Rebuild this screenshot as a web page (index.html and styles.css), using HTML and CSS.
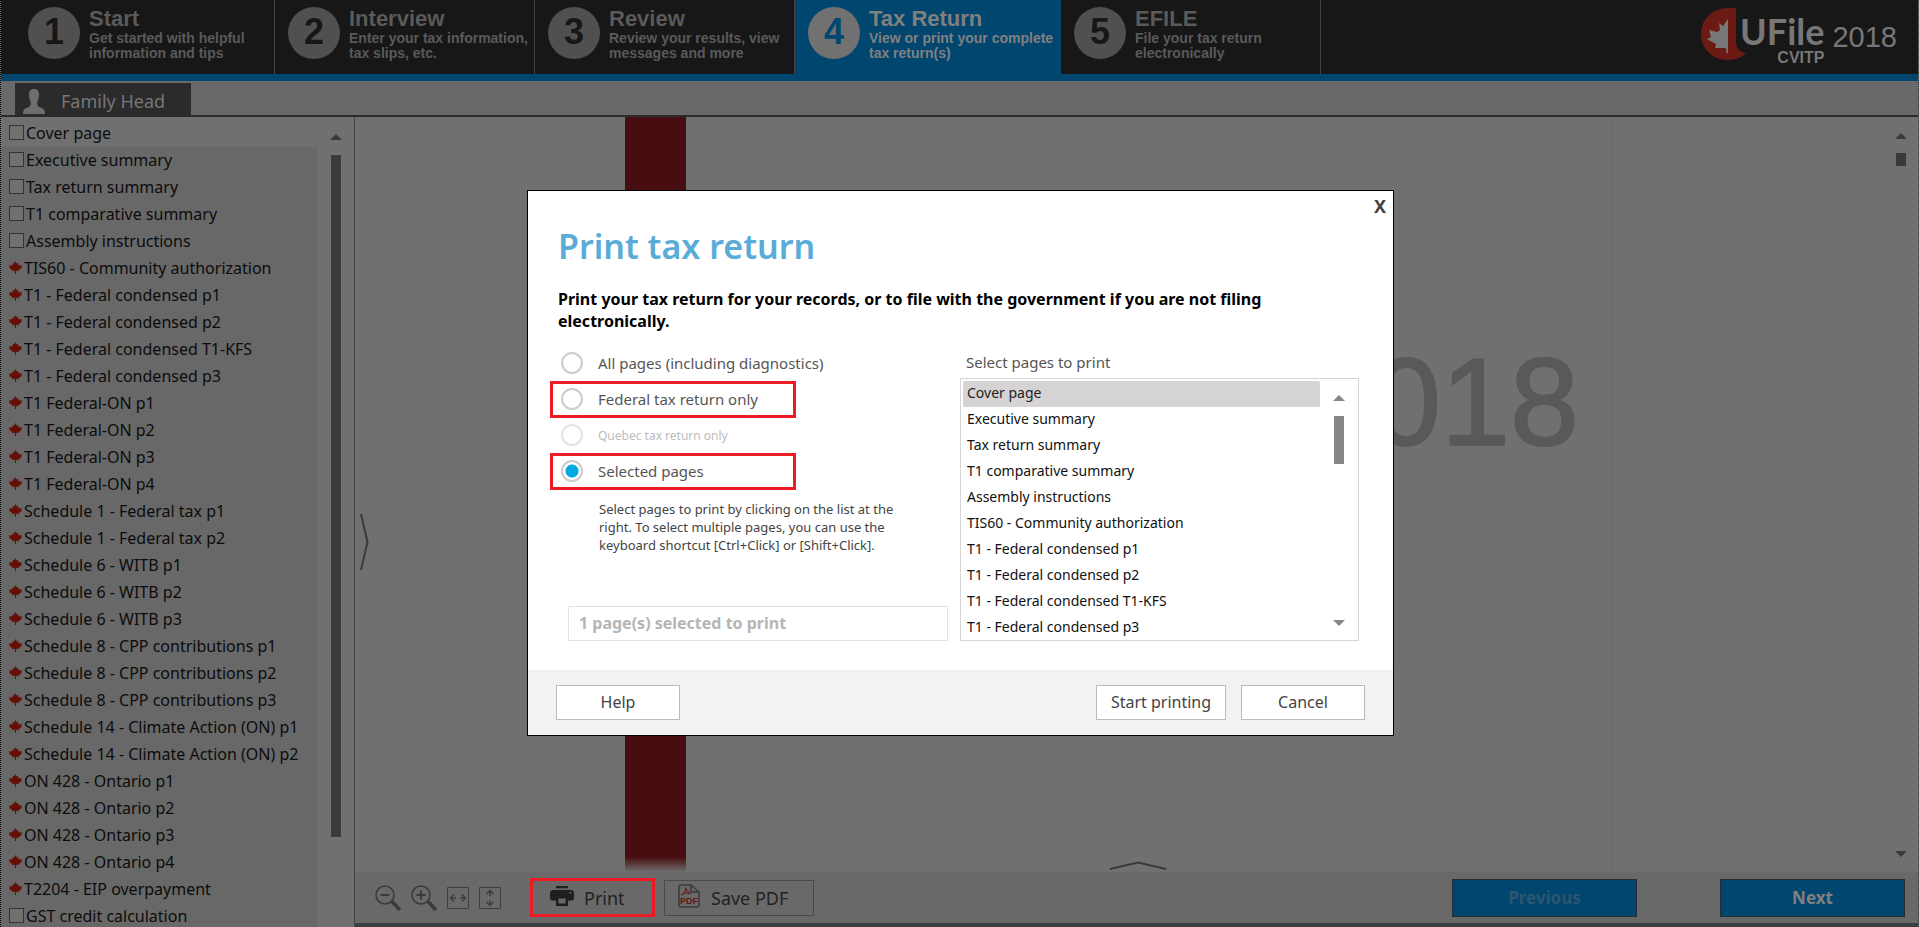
FILE: index.html
```html
<!DOCTYPE html>
<html lang="en">
<head>
<meta charset="utf-8">
<title>UFile 2018 - Print tax return</title>
<link rel="stylesheet" href="styles.css">
</head>
<body>
<svg class="defs" aria-hidden="true">
  <symbol id="leaf" viewBox="0 0 24 24"><path d="M12 0 9.600 4.600 6.800 3.400 7.600 7.600 5.400 6.600 4.600 8.400 0 8 1.600 11.400 0 12.600 6.400 17.200 5.800 18.800 11 18.200V24h2v-5.800l5.200.600-.600-1.600L24 12.600l-1.600-1.200L24 8l-4.600.400-.8-1.800-2.200 1 .8-4.200-2.800 1.200z"/></symbol>
</svg>
<div class="app">
  <header class="top">
    <nav class="steps">
      <a class="step first" href="#start"><span class="num">1</span><span class="txt"><b>Start</b><span>Get started with helpful<br>information and tips</span></span></a>
      <a class="step" href="#interview"><span class="num">2</span><span class="txt"><b>Interview</b><span>Enter your tax information,<br>tax slips, etc.</span></span></a>
      <a class="step" href="#review"><span class="num">3</span><span class="txt"><b>Review</b><span>Review your results, view<br>messages and more</span></span></a>
      <a class="step active" href="#return"><span class="num">4</span><span class="txt"><b>Tax Return</b><span>View or print your complete<br>tax return(s)</span></span></a>
      <a class="step" href="#efile"><span class="num">5</span><span class="txt"><b>EFILE</b><span>File your tax return<br>electronically</span></span></a>
    </nav>
    <div class="brand">
      <svg class="brand-mark" viewBox="0 0 46 53" aria-hidden="true">
        <path fill="#6b1b14" d="M35 1H27C12 1 0 12 0 27s12 26 26 26c8 0 14-2 19-7-7-1-10-5-10-12z"/>
        <path fill="#777" d="M27 12v34h-1.500L25 41H14l1-4-9-5 4-2-2-7 8 2 3-2-1-7 4 3z"/>
      </svg>
      <div class="brand-name"><span class="ufile">UFile</span><span class="cvitp">CVITP</span></div>
      <span class="year">2018</span>
    </div>
  </header>
  <div class="tabs">
    <button class="tab" type="button">
      <svg width="22" height="25" viewBox="0 0 26 25" preserveAspectRatio="none" aria-hidden="true"><path fill="#6e6e6e" d="M13 0c4 0 6 2 6 6 0 3-1 4-2 7-.500 2 0 4 2 5 4 1 7 2 7 7H0c0-5 3-6 7-7 2-1 2.500-3 2-5-1-3-2-4-2-7 0-4 2-6 6-6z"/></svg>
      Family Head
    </button>
  </div>
  <div class="main">
    <aside class="side">
      <ul class="pages">
        <li class="current"><label><input type="checkbox">Cover page</label></li>
        <li><label><input type="checkbox">Executive summary</label></li>
        <li><label><input type="checkbox">Tax return summary</label></li>
        <li><label><input type="checkbox">T1 comparative summary</label></li>
        <li><label><input type="checkbox">Assembly instructions</label></li>
        <li><a href="#p"><svg><use href="#leaf"/></svg>TIS60 - Community authorization</a></li>
        <li><a href="#p"><svg><use href="#leaf"/></svg>T1 - Federal condensed p1</a></li>
        <li><a href="#p"><svg><use href="#leaf"/></svg>T1 - Federal condensed p2</a></li>
        <li><a href="#p"><svg><use href="#leaf"/></svg>T1 - Federal condensed T1-KFS</a></li>
        <li><a href="#p"><svg><use href="#leaf"/></svg>T1 - Federal condensed p3</a></li>
        <li><a href="#p"><svg><use href="#leaf"/></svg>T1 Federal-ON p1</a></li>
        <li><a href="#p"><svg><use href="#leaf"/></svg>T1 Federal-ON p2</a></li>
        <li><a href="#p"><svg><use href="#leaf"/></svg>T1 Federal-ON p3</a></li>
        <li><a href="#p"><svg><use href="#leaf"/></svg>T1 Federal-ON p4</a></li>
        <li><a href="#p"><svg><use href="#leaf"/></svg>Schedule 1 - Federal tax p1</a></li>
        <li><a href="#p"><svg><use href="#leaf"/></svg>Schedule 1 - Federal tax p2</a></li>
        <li><a href="#p"><svg><use href="#leaf"/></svg>Schedule 6 - WITB p1</a></li>
        <li><a href="#p"><svg><use href="#leaf"/></svg>Schedule 6 - WITB p2</a></li>
        <li><a href="#p"><svg><use href="#leaf"/></svg>Schedule 6 - WITB p3</a></li>
        <li><a href="#p"><svg><use href="#leaf"/></svg>Schedule 8 - CPP contributions p1</a></li>
        <li><a href="#p"><svg><use href="#leaf"/></svg>Schedule 8 - CPP contributions p2</a></li>
        <li><a href="#p"><svg><use href="#leaf"/></svg>Schedule 8 - CPP contributions p3</a></li>
        <li><a href="#p"><svg><use href="#leaf"/></svg>Schedule 14 - Climate Action (ON) p1</a></li>
        <li><a href="#p"><svg><use href="#leaf"/></svg>Schedule 14 - Climate Action (ON) p2</a></li>
        <li><a href="#p"><svg><use href="#leaf"/></svg>ON 428 - Ontario p1</a></li>
        <li><a href="#p"><svg><use href="#leaf"/></svg>ON 428 - Ontario p2</a></li>
        <li><a href="#p"><svg><use href="#leaf"/></svg>ON 428 - Ontario p3</a></li>
        <li><a href="#p"><svg><use href="#leaf"/></svg>ON 428 - Ontario p4</a></li>
        <li><a href="#p"><svg><use href="#leaf"/></svg>T2204 - EIP overpayment</a></li>
        <li><label><input type="checkbox">GST credit calculation</label></li>
      </ul>
      <div class="side-scroll"><i class="up"></i><i class="thumb"></i></div>
    </aside>
    <section class="work">
      <div class="viewer">
        <button class="expand" type="button" aria-label="Expand list"><svg width="9" height="58" viewBox="0 0 9 58"><path d="M1 1 7.500 29 1 57" fill="none" stroke="#3a3a3a" stroke-width="2"/></svg></button>
        <div class="sheet">
          <div class="band"></div>
          <div class="sheet-year">2018</div>
          <button class="raise" type="button" aria-label="Show details"><svg width="58" height="9" viewBox="0 0 58 9"><path d="M1 8 29 1.500 57 8" fill="none" stroke="#3a3a3a" stroke-width="2"/></svg></button>
        </div>
        <div class="view-scroll"><i class="up"></i><i class="thumb"></i><i class="down"></i></div>
      </div>
      <footer class="bar">
        <div class="zooms">
          <button type="button" aria-label="Zoom out"><svg width="26" height="26" viewBox="0 0 26 26" fill="none" stroke="#3a3a3a"><circle cx="10" cy="10" r="9" stroke-width="1.500"/><path d="M5.500 10h9" stroke-width="2"/><path d="M17 16.500 25 25" stroke-width="3.500"/></svg></button>
          <button type="button" aria-label="Zoom in"><svg width="26" height="26" viewBox="0 0 26 26" fill="none" stroke="#3a3a3a"><circle cx="10" cy="10" r="9" stroke-width="1.500"/><path d="M5.500 10h9M10 5.500v9" stroke-width="2"/><path d="M17 16.500 25 25" stroke-width="3.500"/></svg></button>
          <button type="button" aria-label="Fit width"><svg width="22" height="22" viewBox="0 0 22 22" fill="none" stroke="#3e3e3e"><path d="M.5.500h21v21H.500z"/><path d="M4 11h5M13 11h5M7 7.500 3.500 11 7 14.500M15 7.500 18.500 11 15 14.500" stroke-width="1.500"/></svg></button>
          <button type="button" aria-label="Fit page"><svg width="22" height="22" viewBox="0 0 22 22" fill="none" stroke="#3e3e3e"><path d="M.5.500h21v21H.500z"/><path d="M11 4v5M11 13v5M7.500 7 11 3.500 14.500 7M7.500 15 11 18.500 14.500 15" stroke-width="1.500"/></svg></button>
        </div>
        <button class="tool marked" type="button">
          <svg width="24" height="20" viewBox="0 0 24 20" aria-hidden="true"><path fill="#1f1f1f" d="M6 0h12v2.200H6zM2 4h20l2 2v7l-1.500 1.500H18V20H6v-5.500H1.500L0 13V6z"/><path fill="#696969" d="M8.500 12.500h7v5h-7zM19.500 6h2v1.500h-2z"/></svg>Print</button>
        <button class="tool save" type="button">
          <svg width="22" height="24" viewBox="0 0 22 24" aria-hidden="true"><path d="M1 3q0-2 2-2h10l8 7v13q0 2-2 2H3q-2 0-2-2z" fill="none" stroke="#3a3a3a" stroke-width="1.500"/><path d="M13 1v7h8" fill="none" stroke="#3a3a3a" stroke-width="1.500"/><path d="M3 11Q8 9 7.500 3.500q.500 4 5 6Q7 7.500 3 11z" fill="none" stroke="#6b1414"/><text x="2" y="20" class="pdf-mark">PDF</text></svg>Save PDF</button>
        <button class="move prev" type="button" disabled>Previous</button>
        <button class="move" type="button">Next</button>
      </footer>
    </section>
  </div>
</div>

<div class="overlay">
  <div class="dialog" role="dialog" aria-modal="true" aria-labelledby="dlg-title">
    <button class="close" type="button" aria-label="Close">X</button>
    <div class="content">
      <h1 id="dlg-title">Print tax return</h1>
      <p class="lead">Print your tax return for your records, or to file with the government if you are not filing electronically.</p>
      <div class="cols">
        <div class="choices">
          <label class="choice"><input type="radio" name="scope">All pages (including diagnostics)</label>
          <label class="choice marked"><input type="radio" name="scope">Federal tax return only</label>
          <label class="choice off"><input type="radio" name="scope" disabled>Quebec tax return only</label>
          <label class="choice marked"><input type="radio" name="scope" checked>Selected pages</label>
          <p class="hint">Select pages to print by clicking on the list at the right. To select multiple pages, you can use the keyboard shortcut [Ctrl+Click] or [Shift+Click].</p>
          <input class="count" type="text" aria-label="Selection" value="1 page(s) selected to print" disabled>
        </div>
        <div class="picker">
          <label for="pick">Select pages to print</label>
          <div class="listbox">
            <select id="pick" multiple size="10">
              <option selected>Cover page</option>
              <option>Executive summary</option>
              <option>Tax return summary</option>
              <option>T1 comparative summary</option>
              <option>Assembly instructions</option>
              <option>TIS60 - Community authorization</option>
              <option>T1 - Federal condensed p1</option>
              <option>T1 - Federal condensed p2</option>
              <option>T1 - Federal condensed T1-KFS</option>
              <option>T1 - Federal condensed p3</option>
            </select>
            <div class="list-scroll"><i class="up"></i><i class="thumb"></i><i class="down"></i></div>
          </div>
        </div>
      </div>
    </div>
    <div class="actions">
      <button type="button">Help</button>
      <button class="go" type="button">Start printing</button>
      <button type="button">Cancel</button>
    </div>
  </div>
</div>
</body>
</html>
```
FILE: styles.css
```css
* { box-sizing: border-box; }
body {
  margin: 0;
  font-family: "Noto Sans", "Open Sans", sans-serif;
  font-size: 16px;
  color: #0c0c0c;
  background: #707070;
}
a { color: inherit; text-decoration: none; }
button { font: inherit; color: inherit; background: none; border: 0; padding: 0; }
.defs { display: none; }

.app {
  height: 100vh;
  display: flex;
  flex-direction: column;
  overflow: hidden;
  border-left: 1px dotted #000;
  border-right: 1px dotted #333;
}

/* header */
.top {
  flex: none;
  display: flex;
  justify-content: space-between;
  height: 81px;
  background: #171717;
  border-bottom: 7px solid #00466f;
  font-family: "Liberation Sans", Arial, sans-serif;
}
.steps { display: flex; }
.step {
  display: flex;
  align-items: flex-start;
  gap: 9px;
  width: 260px;
  padding: 7px 0 0 13px;
  border-right: 1px solid #444;
  color: #5a5a5a;
  white-space: nowrap;
}
.step.first { width: 274px; padding-left: 27px; }
.step.active { width: 266px; background: #00466f; color: #808080; border-color: #00466f; }
.num {
  flex: none;
  width: 52px;
  height: 52px;
  border-radius: 50%;
  background: #505050;
  color: #171717;
  font-size: 36px;
  font-weight: bold;
  line-height: 50px;
  text-align: center;
}
.active .num { background: #717171; color: #00466f; }
.txt { font-size: 14px; font-weight: bold; line-height: 15px; }
.txt b { display: block; font-size: 22px; line-height: 24px; }
.brand { display: flex; align-items: flex-start; padding: 7px 21px 0 0; color: #777; }
.brand-mark { width: 46px; height: 53px; }
.brand-name { display: flex; flex-direction: column; align-items: flex-end; margin-left: -7px; }
.ufile { font-family: Lato, sans-serif; font-weight: 700; font-size: 36px; line-height: 40px; padding-top: 4px; }
.cvitp { font-weight: bold; font-size: 16px; line-height: 16px; margin-top: -1px; }
.year { font-size: 29px; line-height: 32px; margin: 14px 0 0 8px; }

/* tab strip */
.tabs {
  flex: none;
  height: 36px;
  padding: 2px 0 0 14px;
  background: #696969;
  border-bottom: 2px solid #2b2b2b;
}
.tab {
  display: flex;
  align-items: flex-end;
  gap: 16px;
  height: 32px;
  width: 176px;
  padding: 0 0 1px 8px;
  background: #2b2b2b;
  color: #777;
  font-size: 18px;
  line-height: 26px;
}

/* page list */
.main { flex: 1; display: flex; min-height: 0; }
.side { flex: none; width: 354px; display: flex; border-right: 1px solid #3c4448; overflow: hidden; }
.pages { flex: 1; margin: 0; padding: 3px 0 0; list-style: none; }
.pages li { height: 27px; background: #686868; }
.pages li.current { background: #707070; }
.pages label, .pages a { display: flex; align-items: center; height: 27px; padding-left: 8px; white-space: nowrap; line-height: 27px; }
.pages input {
  appearance: none;
  width: 15px;
  height: 15px;
  margin: 0 2px 2px 0;
  border: 1px solid #333;
  background: #707070;
}
.pages svg { width: 13px; height: 13px; margin: 0 2px 2px 0; fill: #661005; }
.side-scroll { width: 37px; display: flex; flex-direction: column; align-items: center; padding-top: 17px; }

.up, .down { width: 0; height: 0; border: 6px solid transparent; border-top-width: 0; border-bottom: 6px solid #3a3a3a; }
.down { border-top: 6px solid #3a3a3a; border-bottom-width: 0; }
.thumb { width: 10px; background: #3a3a3a; }
.side-scroll .thumb { height: 86%; margin-top: 15px; }

/* document viewer */
.work { flex: 1; display: flex; flex-direction: column; min-width: 0; }
.viewer { flex: 1; display: flex; align-items: stretch; min-height: 0; }
.expand { width: 20px; display: flex; align-items: center; padding: 94px 0 0 5px; }
.sheet { flex: 1; position: relative; border-right: 1px solid #676767; }
.band { width: 61px; height: 100%; margin-left: 250px; background: linear-gradient(#480d10 calc(100% - 15px), #6e6e6e); }
.sheet-year {
  position: absolute;
  top: 215px;
  right: 33px;
  font-family: "Liberation Sans", Arial, sans-serif;
  font-size: 124px;
  line-height: 140px;
  color: #595959;
  -webkit-text-stroke: 2px #595959;
}
.raise { position: absolute; bottom: 2px; left: 734px; line-height: 0; }
.view-scroll { width: 305px; display: flex; flex-direction: column; align-items: flex-end; padding: 16px 11px 15px 0; }
.view-scroll .thumb { height: 13px; margin: 14px 1px auto 0; }

/* bottom bar */
.bar {
  flex: none;
  display: flex;
  align-items: center;
  height: 55px;
  padding-left: 20px;
  padding-right: 13px;
  background: #696969;
  border-bottom: 4px solid #3a3d42;
}
.zooms { display: flex; align-items: center; gap: 10px; }
.zooms button { line-height: 0; }
.tool { display: flex; align-items: center; font-size: 18px; color: #222; height: 36px; white-space: nowrap; }
.tool.marked { height: 39px; width: 125px; margin-left: 29px; border: 3px solid #ed1c24; padding-left: 17px; gap: 10px; }
.tool.save { width: 150px; margin-left: 9px; border: 1px solid #4a4a4a; padding-left: 13px; gap: 11px; }
.tool svg { margin-bottom: 3px; }
.pdf-mark { font: bold 9px "Liberation Sans", Arial, sans-serif; fill: #6b1414; }
.move {
  width: 185px;
  height: 38px;
  background: #00466f;
  border: 1px solid #222c33;
  color: #808080;
  font-weight: bold;
  font-size: 17px;
}
.move.prev { margin-left: auto; margin-right: 83px; color: #2c5570; }

/* dialog */
.overlay { position: fixed; inset: 0; display: flex; align-items: center; justify-content: center; padding: 0 0 2px 2px; }
.dialog { position: relative; width: 867px; background: #fff; border: 1px solid #000; color: #555; }
.close { position: absolute; top: 4px; right: 7px; font-weight: bold; font-size: 18px; line-height: 22px; color: #444; }
.content { padding: 30px 34px 29px 22px; }
h1 { margin: 0 0 17px 8px; font-size: 34px; line-height: 50px; font-weight: 600; color: #5aacd8; }
.lead { margin: 0 0 13px 8px; max-width: 740px; font-weight: bold; font-size: 16px; line-height: 22px; color: #000; }
.cols { display: flex; justify-content: space-between; }
.choices { width: 398px; display: flex; flex-direction: column; }
.choice { display: flex; align-items: center; gap: 15px; width: 246px; height: 36px; padding-left: 11px; white-space: nowrap; font-size: 15px; }
.choice.marked { border: 3px solid #ed1c24; padding-left: 8px; height: 37px; }
.choice input {
  appearance: none;
  flex: none;
  width: 22px;
  height: 22px;
  margin: 0;
  border: 2px solid #ccc;
  border-radius: 50%;
  background: #fff;
}
.choice input:checked { background: radial-gradient(circle, #00a9e0 6px, #fff 7px); }
.choice.off { font-size: 12px; color: #bbb; height: 35px; }
.choice.off input { border-color: #e4e4e4; }
.hint { margin: 10px 40px 0 49px; font-size: 13px; line-height: 18px; color: #444; }
.count {
  width: 380px;
  height: 35px;
  margin: 52px 0 0 18px;
  padding: 0 10px;
  border: 1px solid #e2e2e2;
  background: #fff;
  color: #b5b5b5;
  font: bold 16px "Noto Sans", sans-serif;
}
.picker { width: 399px; }
.picker label { display: block; height: 33px; padding-left: 6px; line-height: 34px; font-size: 15px; }
.listbox { display: flex; height: 263px; padding: 2px 0 0 2px; border: 1px solid #d5d5d5; }
select { flex: 1; height: 259px; margin: 0; padding: 0; border: 0; outline: 0; background: #fff; scrollbar-width: none; font: 14px "Noto Sans", sans-serif; color: #111; overflow: hidden; }
option { height: 26px; padding: 2px 4px 0; line-height: 24px; color: #111; }
option:checked { background: linear-gradient(#d5d3d4, #d5d3d4); color: #222; }
.list-scroll { width: 38px; display: flex; flex-direction: column; align-items: center; padding: 14px 0; }
.list-scroll .up { border-bottom-color: #868686; }
.list-scroll .down { border-top-color: #868686; }
.list-scroll .thumb { height: 48px; margin: 15px 0 auto; background: #868686; }
.actions { display: flex; gap: 15px; height: 65px; padding: 15px 28px 0; background: #f2f2f2; }
.actions button { width: 124px; height: 35px; border: 1px solid #bbb; background: #fff; color: #444; }
.actions .go { width: 130px; margin-left: auto; }
```
